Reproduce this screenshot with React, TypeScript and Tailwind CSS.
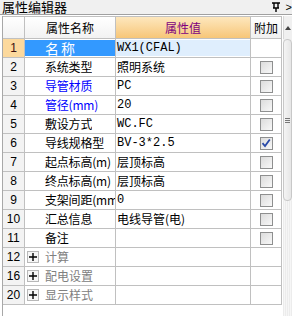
import React from 'react'

type Row = {
  no: string
  name: string
  value?: string
  nameColor?: string
  check?: boolean | null
  group?: boolean
  mono?: boolean
}

const ROWS: Row[] = [
  { no: '1', name: '名称', value: 'WX1(CFAL)', check: null, mono: true },
  { no: '2', name: '系统类型', value: '照明系统', check: false },
  { no: '3', name: '导管材质', value: 'PC', nameColor: 'text-[#0000ff]', check: false, mono: true },
  { no: '4', name: '管径(mm)', value: '20', nameColor: 'text-[#0000ff]', check: false, mono: true },
  { no: '5', name: '敷设方式', value: 'WC.FC', check: false, mono: true },
  { no: '6', name: '导线规格型', value: 'BV-3*2.5', check: true, mono: true },
  { no: '7', name: '起点标高(m)', value: '层顶标高', check: false },
  { no: '8', name: '终点标高(m)', value: '层顶标高', check: false },
  { no: '9', name: '支架间距(mm)', value: '0', check: false, mono: true },
  { no: '10', name: '汇总信息', value: '电线导管(电)', check: false },
  { no: '11', name: '备注', value: '', check: false },
  { no: '12', name: '计算', group: true, check: null },
  { no: '16', name: '配电设置', group: true, check: null },
  { no: '20', name: '显示样式', group: true, check: null },
]

const cjk = "font-['Noto_Sans_CJK_SC',sans-serif]"
const mono = "font-['Liberation_Mono','Noto_Sans_CJK_SC',monospace]"

function CheckBox({ checked }: { checked: boolean }) {
  return (
    <div className="flex h-[13px] w-[13px] items-center justify-center border border-[#8e8f8f] bg-gradient-to-br from-[#dcdcdc] to-[#f8f8f8]">
      {checked && (
        <svg width="10" height="10" viewBox="0 0 10 10">
          <path d="M1.5 5.2 L4 8 L8.8 1.5" fill="none" stroke="#2a4aa8" strokeWidth="1.8" />
        </svg>
      )}
    </div>
  )
}

function PlusBox() {
  return (
    <div className="flex h-[12px] w-[12px] shrink-0 items-center justify-center border border-[#b8b8b8] bg-[#f6f6f6]">
      <svg width="8" height="8" viewBox="0 0 8 8">
        <path d="M0 4 H8 M4 0 V8" stroke="#000" strokeWidth="1.4" />
      </svg>
    </div>
  )
}

export default function App() {
  return (
    <div className="flex h-[316px] w-[292px] flex-col overflow-hidden bg-white">
      {/* Title */}
      <div className="flex h-[15px] shrink-0 items-center justify-between border-b border-[#a0a0a0] bg-[#f0f0f0] pl-[2px]">
        <span className={`${cjk} text-[13px] leading-[14px] text-black`}>属性编辑器</span>
        <div className="flex items-center gap-[6px]">
          <svg width="8" height="10" viewBox="0 0 8 10">
            <path d="M0 1 H8 M2 1 V6 M6 1 V6 M1 6 H7 M4 6 V10" stroke="#000" strokeWidth="1.4" fill="none" />
          </svg>
          <span className="font-['Liberation_Sans',sans-serif] text-[11px] leading-[14px]">&gt;</span>
        </div>
      </div>

      <div className="mt-[1px] flex flex-1">
        {/* Table */}
        <div className="ml-[2px] w-[280px] border-l border-[#a8a8a8]">
          {/* Header */}
          <div className="flex h-[23px] border-y border-[#c0c0c0]">
            <div className="w-[22px] border-r border-[#c0c0c0] bg-gradient-to-b from-[#ffffff] to-[#f2f2f2]" />
            <div className={`${cjk} flex w-[91px] items-center justify-center border-r border-[#c0c0c0] bg-gradient-to-b from-[#ffffff] to-[#f2f2f2] text-[12px] text-black`}>
              属性名称
            </div>
            <div className={`${cjk} flex w-[135px] items-center justify-center border-r border-[#c0c0c0] bg-gradient-to-b from-[#fde7bd] to-[#f7c677] text-[12px] text-[#800080]`}>
              属性值
            </div>
            <div className={`${cjk} flex w-[31px] items-center justify-center border-r border-[#c0c0c0] bg-gradient-to-b from-[#ffffff] to-[#f0f0f0] text-[12px] text-black`}>
              附加
            </div>
          </div>

          {ROWS.map((r, i) => {
            const sel = i === 0
            return (
              <div key={r.no} className="flex h-[19px] border-b border-[#c0c0c0]">
                <div
                  className={`flex w-[22px] items-center justify-center border-r border-[#c0c0c0] font-['Liberation_Sans',sans-serif] text-[12px] ${
                    sel ? 'bg-[#fcd99d] text-[#3a1010]' : 'bg-[#f3f3f3] text-black'
                  }`}
                >
                  {r.no}
                </div>
                <div className="flex w-[91px] overflow-hidden border-r border-[#c0c0c0]">
                  {r.group ? (
                    <div className="flex items-center gap-[6px] pl-[2px]">
                      <PlusBox />
                      <span className={`${cjk} whitespace-nowrap text-[12px] text-[#808080]`}>{r.name}</span>
                    </div>
                  ) : sel ? (
                    <div className={`${cjk} my-[1px] flex flex-1 items-center bg-[#3399ff] pl-[20px] text-[14px] tracking-[2px] text-white`}>
                      {r.name}
                    </div>
                  ) : (
                    <div className={`${cjk} flex w-[90px] items-center overflow-hidden whitespace-nowrap pl-[20px] text-[12px] tracking-[-0.2px] ${r.nameColor ?? 'text-black'}`}>
                      <span className="block overflow-hidden">{r.name}</span>
                    </div>
                  )}
                </div>
                <div className="flex w-[135px] overflow-hidden border-r border-[#c0c0c0]">
                  <div
                    className={`my-[1px] flex flex-1 items-center whitespace-nowrap pl-[1px] text-[12px] text-black ${
                      r.mono ? mono : cjk
                    } ${sel ? 'bg-[#dfeefd]' : ''}`}
                  >
                    {r.value}
                  </div>
                </div>
                <div className="flex w-[31px] items-center justify-center border-r border-[#c0c0c0]">
                  {r.check !== null && r.check !== undefined && <CheckBox checked={r.check} />}
                </div>
              </div>
            )
          })}
        </div>

        {/* Scrollbar */}
        <div className="ml-[1px] flex flex-1 flex-col bg-[#f0f0f0]">
          <div className="flex h-[23px] items-center justify-end border-l border-[#d8d8d8] pr-[1px]">
            <svg width="6" height="4" viewBox="0 0 6 4">
              <path d="M0 4 L3 0 L6 4 Z" fill="#444" />
            </svg>
          </div>
          <div className="flex h-[162px] items-center justify-end rounded-sm border border-[#c8c8c8] bg-gradient-to-r from-[#f4f4f4] to-[#e6e6e6] pr-[1px]">
            <div className="flex flex-col gap-[1px]">
              <div className="h-px w-[5px] bg-[#777]" />
              <div className="h-px w-[5px] bg-[#777]" />
              <div className="h-px w-[5px] bg-[#777]" />
            </div>
          </div>
          <div className="flex-1 bg-[repeating-linear-gradient(90deg,#ececec_0px,#ececec_1px,#f6f6f6_1px,#f6f6f6_2px)]" />
        </div>
      </div>
    </div>
  )
}
